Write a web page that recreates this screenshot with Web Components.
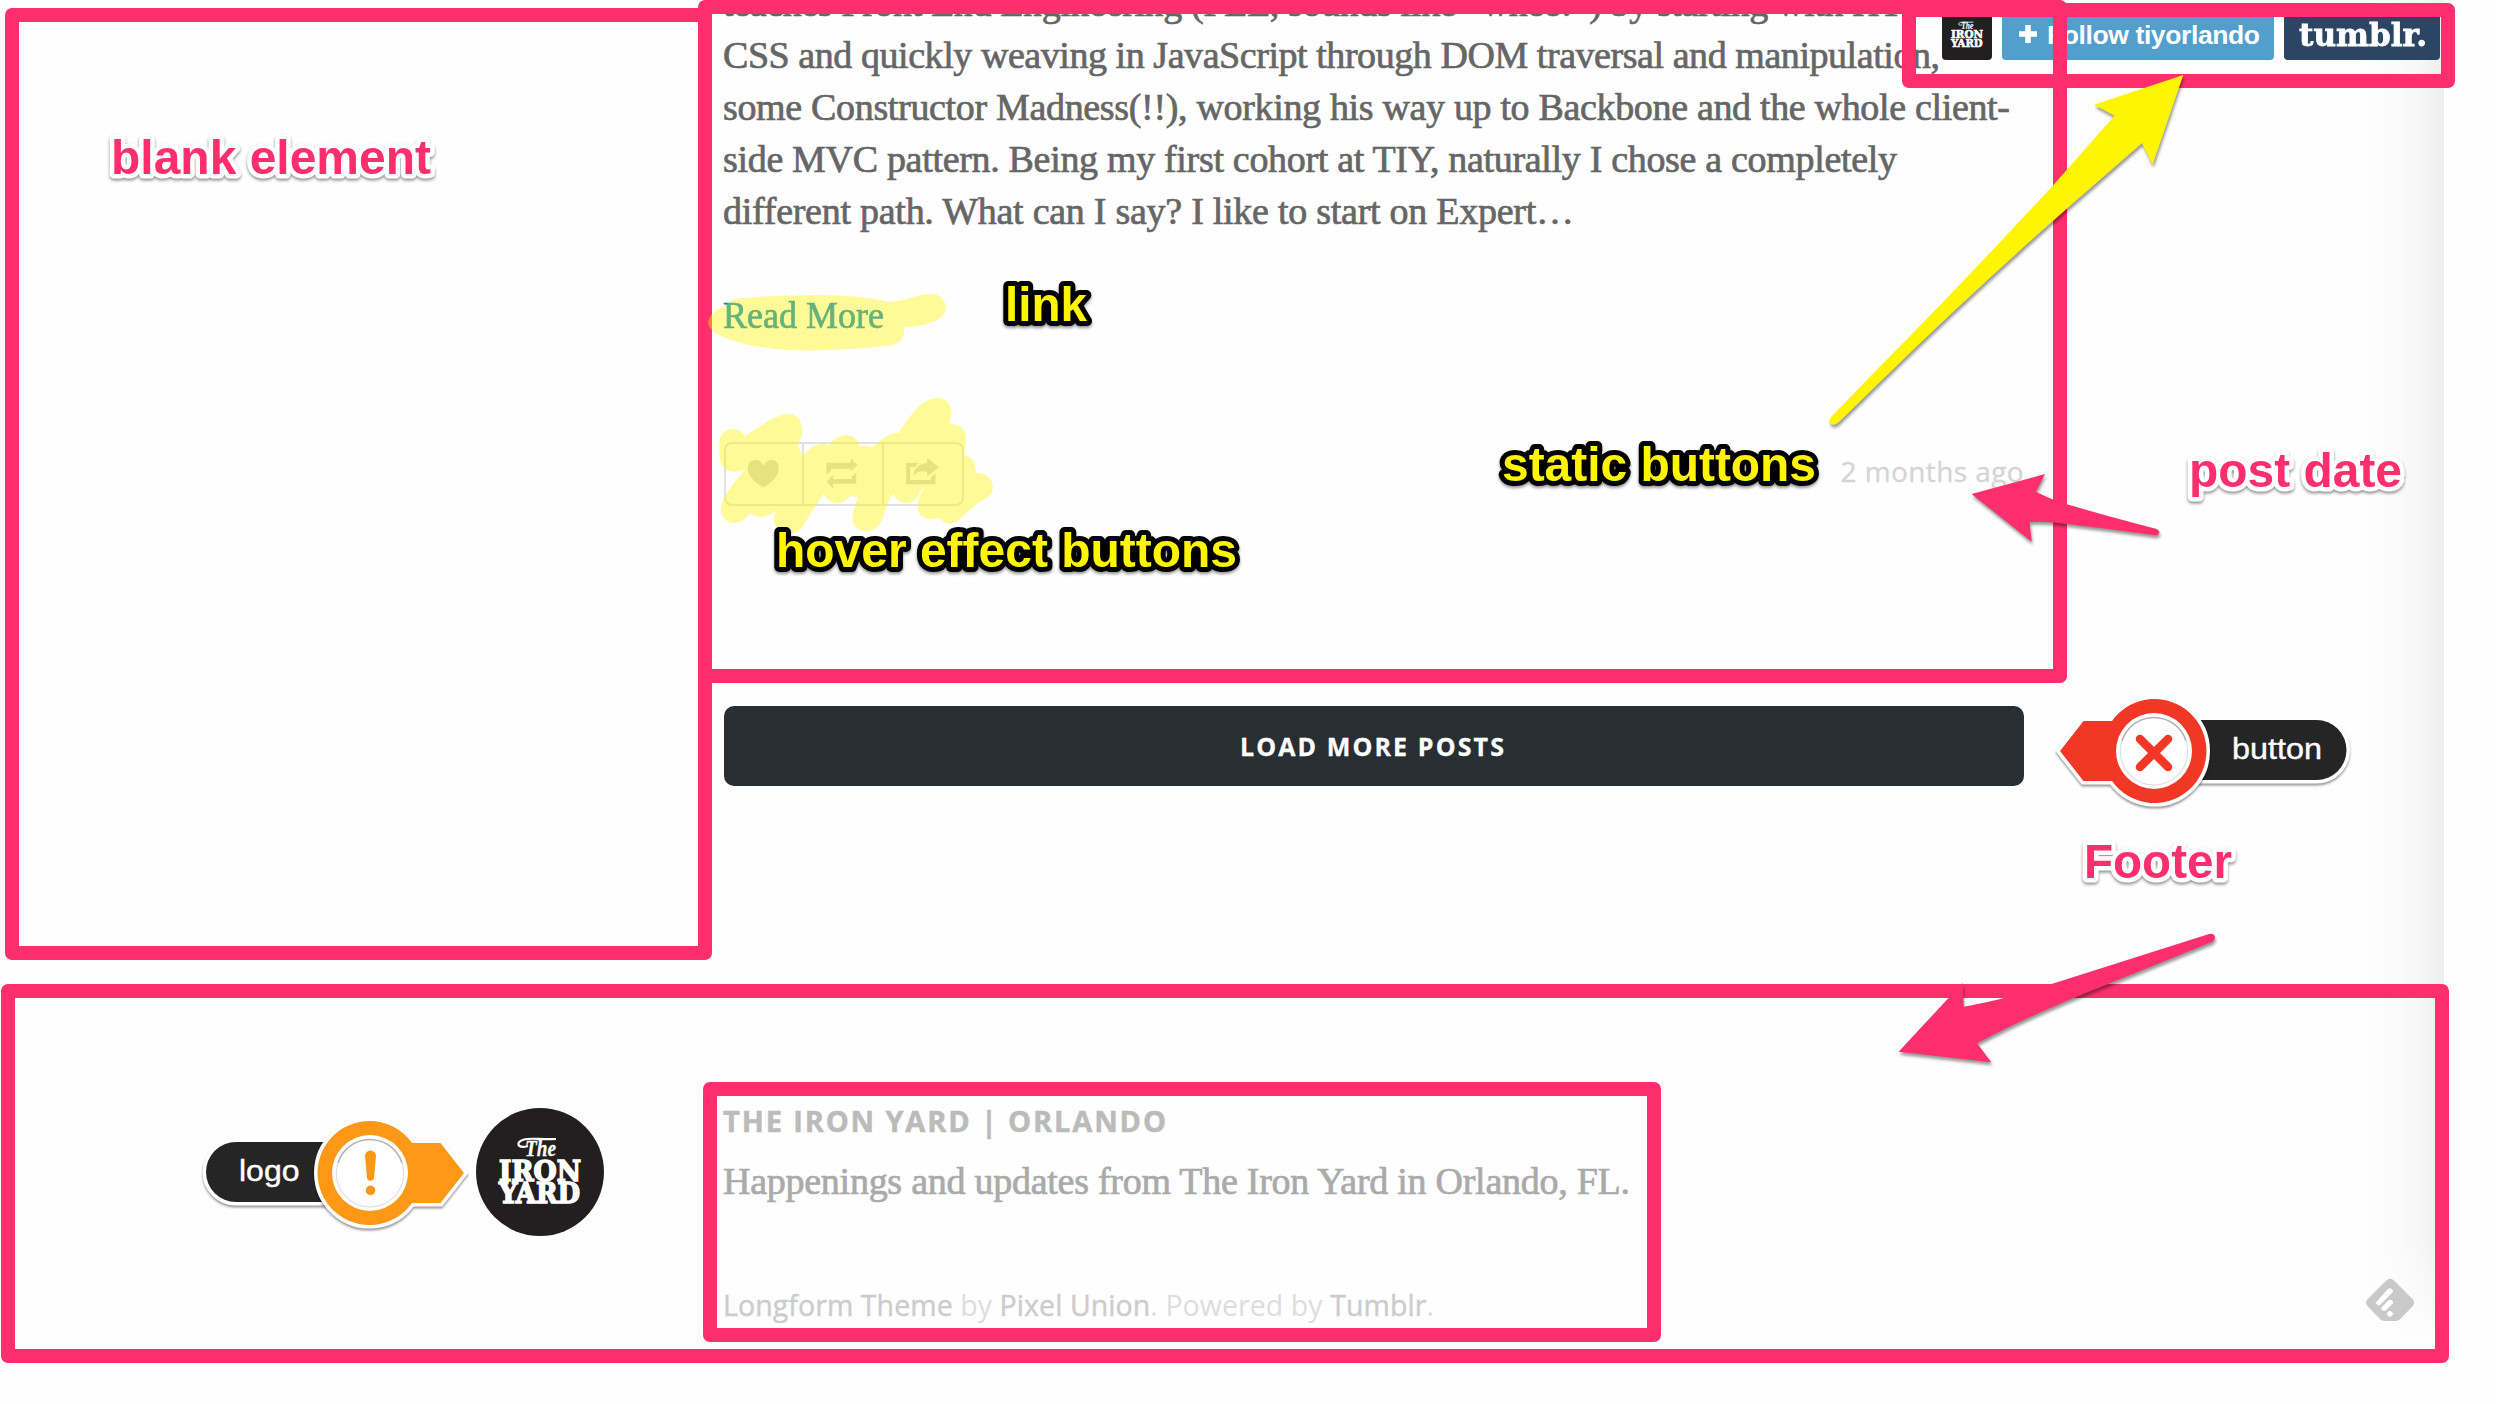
<!DOCTYPE html>
<html lang="en">
<head>
<meta charset="utf-8">
<title>The Iron Yard | Orlando</title>
<style>
html,body{margin:0;padding:0}
body{background:#fefefe;width:2496px;height:1404px;overflow:hidden;position:relative}
</style>
</head>
<body>
<blog-page>
  <blog-post slot="post">
    <fit-text w="1245">teaches Front End Engineering (FEE, sounds like “whee!”) by starting with HTML,</fit-text>
    <fit-text w="1217">CSS and quickly weaving in JavaScript through DOM traversal and manipulation,</fit-text>
    <fit-text w="1287">some Constructor Madness(!!), working his way up to Backbone and the whole client-</fit-text>
    <fit-text w="1174">side MVC pattern. Being my first cohort at TIY, naturally I chose a completely</fit-text>
    <fit-text w="851">different path. What can I say? I like to start on Expert…</fit-text>
  </blog-post>
  <load-button slot="more">LOAD MORE POSTS</load-button>
  <site-footer slot="footer"></site-footer>
</blog-page>
<follow-bar></follow-bar>
<feed-badge></feed-badge>
<ink-marks></ink-marks>
<frame-box x="5" y="8" w="707" h="952.3"></frame-box>
<frame-box x="698" y="0" w="1369" h="682.5"></frame-box>
<frame-box x="1902" y="3" w="553" h="85"></frame-box>
<frame-box x="1.2" y="984.2" w="2448.3" h="378.5"></frame-box>
<frame-box x="703" y="1082.4" w="958" h="259.3"></frame-box>
<arrow-marks></arrow-marks>
<note-label x="110.5" y="173.7" w="320">blank element</note-label>
<note-label x="2188.5" y="487.3" w="213">post date</note-label>
<note-label x="2084" y="878" w="148">Footer</note-label>
<note-label x="1005" y="320.7" w="82" tone="yellow">link</note-label>
<note-label x="776" y="566.7" w="461" tone="yellow">hover effect buttons</note-label>
<note-label x="1502" y="481" w="314" tone="yellow">static buttons</note-label>
<pin-callout kind="cross" label="button"></pin-callout>
<pin-callout kind="alert" label="logo"></pin-callout>

<script>
const define=(name,html,after)=>customElements.define(name,class extends HTMLElement{
  connectedCallback(){
    if(this.shadowRoot)return;
    const root=this.attachShadow({mode:'open'});
    root.innerHTML=typeof html==='function'?html(this):html;
    if(after)after(this,root);
  }
});

define('blog-page',`<style>
:host{display:block;width:2444px;height:1404px;overflow:hidden}
.sheet{display:flex;flex-direction:column;height:1404px;position:relative}
.shade{position:absolute;right:0;top:0;width:84px;height:1348px;background:linear-gradient(to right,rgba(0,0,0,0),rgba(0,0,0,.012) 40%,rgba(0,0,0,.028) 70%,rgba(0,0,0,.062));-webkit-mask:linear-gradient(#000 1240px,transparent 1345px)}
.col{width:1300px;margin-left:724px;height:1100px;flex:none}
</style><div class="sheet"><div class="col"><slot name="post"></slot><slot name="more"></slot></div><slot name="footer"></slot><div class="shade"></div></div>`);

define('blog-post',`<style>
:host{display:block;height:706px;margin-left:-1px;overflow:hidden;font:38px/52px "Liberation Serif",serif;color:#666;-webkit-text-stroke:.7px currentColor}
.body{display:flex;flex-direction:column;margin-top:-23px}
a{display:block;margin-top:52px;color:#08c;text-decoration:none}
.meta{display:flex;justify-content:space-between;margin:101px 0 0 1px;height:64px}
time{font:28px/58px "Open Sans",sans-serif;color:#d4d4d4;-webkit-text-stroke:.3px #d4d4d4}
</style><div class="body"><slot></slot></div><a><fit-text w="161" scale>Read More</fit-text></a>
<div class="meta"><share-controls></share-controls><time><fit-text w="183">2 months ago</fit-text></time></div>`);

define('share-controls',`<style>
:host{display:flex;width:240px;height:64px;border-radius:8px;box-shadow:inset 0 0 0 2px #e2e2e2}
button{all:unset;display:block;width:80px;height:64px;box-shadow:inset -2px 0 #e2e2e2}
button:last-child{box-shadow:none}
svg{display:block;width:80px;height:64px;fill:#d5d5d5}
</style>
<button><svg preserveAspectRatio="none" viewBox="87 187 202 192"><path d="M187 323C158 304 147 285 147 266C147 250 155 241 167 241C178 241 184 249 187 260C190 248 197 241 207 241C219 241 225 250 225 266C225 285 215 304 187 323Z"/></svg></button>
<button><svg preserveAspectRatio="none" viewBox="289 187 202 192"><path d="M346 284V249H407V236L424 256L407 275V267H357V275ZM421 279V312H362V326L346 307L362 286V298H410V290Z"/></svg></button>
<button><svg preserveAspectRatio="none" viewBox="491 187 202 192"><path d="M547 249H579L569 262H557V301H610V292L621 281V314H547ZM600 236L630 263L600 290V276C583 272 573 278 565 288C566 265 581 252 600 250Z"/></svg></button>`);

define('load-button',`<style>
:host{display:flex;height:80px;border-radius:10px;background:#272f34;align-items:center;justify-content:center;color:#fff;font:700 25px/80px "Open Sans",sans-serif;-webkit-text-stroke:.3px #fff}
fit-text{margin-right:2px}
</style><fit-text w="264"><slot></slot></fit-text>`);

define('site-footer',`<style>
:host{display:flex;gap:119px;padding-left:476px}
iron-logo{margin-top:8px;width:128px;height:128px;border-radius:50%}
.text{display:flex;flex-direction:column}
h2{margin:1px 0 0;font:700 29px/40px "Open Sans",sans-serif;color:#bbb;-webkit-text-stroke:.5px #bbb}
p{margin:14px 0 0;font:38px/52px "Liberation Serif",serif;color:#aaa;-webkit-text-stroke:.7px currentColor}
small{margin-top:78px;font:28.5px/40px "Open Sans",sans-serif;color:#ddd}
a{color:#ccc;-webkit-text-stroke:.4px #ccc}
</style><iron-logo></iron-logo><div class="text">
<h2><fit-text w="443">THE IRON YARD | ORLANDO</fit-text></h2>
<p><fit-text w="907">Happenings and updates from The Iron Yard in Orlando, FL.</fit-text></p>
<small><fit-text w="711"><a>Longform Theme</a> by <a>Pixel Union</a>. Powered by <a>Tumblr</a>.</fit-text></small></div>`);

define('iron-logo',`<style>
:host{display:block;background:#231f20;overflow:hidden;flex:none}
svg{display:block;width:100%;height:100%;fill:#fff}
text{font-family:"DejaVu Serif",serif;font-weight:700;font-size:27px;stroke:#fff;stroke-width:1.5px}
.the{font-family:"Liberation Serif",serif;font-style:italic;font-size:24px;stroke-width:.3px}
</style><svg viewBox="0 0 128 128">
<path d="M52 38C41 41 39 34 48 31.500C56 29.500 66 32 80 31" fill="none" stroke="#fff" stroke-width="2.2"/>
<text class="the" x="49" y="47.500" textLength="31" lengthAdjust="spacingAndGlyphs">The</text>
<text x="23" y="72.500" textLength="82" lengthAdjust="spacingAndGlyphs">IRON</text>
<text x="23" y="95" textLength="81" lengthAdjust="spacingAndGlyphs">YARD</text></svg>`);

define('follow-bar',`<style>
:host{position:absolute;left:1942px;top:10px;display:flex;gap:10px;height:50px;color:#fff}
iron-logo,.f,.t{height:50px;border-radius:4px;box-sizing:border-box}
iron-logo{width:50px}
.f{width:272px;background:#529ecc;display:flex;align-items:center;padding-left:17px;font:700 26.5px/50px "Liberation Sans",sans-serif}
.f svg{width:18px;height:18px;margin-right:10px;margin-bottom:2px}
.f fit-text{line-height:48px}
.t{width:156px;background:#2d4564;padding-left:15px;font:700 32px/51px "DejaVu Serif",serif;-webkit-text-stroke:.8px #fff}
</style><iron-logo></iron-logo><div class="f"><svg viewBox="0 0 18 18"><path d="M9 0V18M0 9H18" stroke="#fff" stroke-width="5.5"/></svg><fit-text w="213">Follow tiyorlando</fit-text></div><div class="t"><fit-text w="128" scale>tumblr.</fit-text></div>`);

define('feed-badge',`<style>:host{position:absolute;left:2365px;top:1278px}svg{display:block;width:50px;height:44px}</style>
<svg viewBox="1250 1134 121.35 132" preserveAspectRatio="none"><path fill="#c9c9c9" d="M1303 1140Q1311 1133 1319 1140L1366 1198Q1372 1208 1366 1218L1335 1258Q1331 1263 1325 1263H1297Q1291 1263 1287 1258L1256 1218Q1249 1208 1256 1198Z"/>
<path fill="#fff" d="M1276 1208L1305 1168Q1311 1162 1315 1167Q1320 1172 1317 1177L1288 1213Q1285 1217 1282 1216Q1276 1212 1276 1208ZM1289 1224L1307 1201Q1311 1197 1315 1201Q1320 1206 1318 1210L1302 1229Q1298 1234 1294 1232Q1289 1229 1289 1224ZM1302 1241L1308 1233H1313L1319 1241L1313 1250H1308Z"/></svg>`);

define('ink-marks',`<style>:host{position:absolute;left:0;top:0;z-index:2;pointer-events:none}svg{display:block}</style>
<svg width="2496" height="1404"><g fill="#fff500" fill-opacity=".4">
<path d="M708 323C708 318 714 309 725 306C730 300 737 298 745 298Q780 295 816 295Q864 295 888 302Q903 301 917 296C925 294 928 294 932 294C940 294 946 301 946 308C946 317 935 322 923 325Q914 327 904 327V333C903 340 898 344 892 345Q840 352 789 350Q752 348 725 338Q709 331 708 323Z"/>
<path transform="translate(690 380) scale(.39541 .33333)" d="M74 190C75 160 90 147 108 147C122 147 132 155 140 167C175 140 220 102 248 102C272 102 286 125 283 160Q280 182 273 199Q282 212 283 228Q308 196 330 192Q342 191 350 195Q372 165 393 165C415 165 426 180 428 200Q445 194 462 202Q500 160 520 158L528 158C560 100 590 54 625 54C650 54 662 75 660 100Q659 118 656 132C685 130 698 150 698 180Q697 205 693 226C715 230 723 250 723 279C750 278 766 298 766 320C766 345 750 355 735 363C700 390 680 431 658 431Q642 430 630 413Q618 418 610 417C586 417 574 395 575 375Q579 350 592 322Q584 327 580 342C574 360 560 369 547 369Q527 368 513 342Q500 365 490 405C480 440 466 453 446 453C422 453 410 435 411 412Q415 378 425 352Q415 352 405 347C397 360 385 369 372 369Q350 368 338 342Q310 390 290 430C280 452 270 460 258 459C232 460 211 440 211 415Q214 400 220 390Q202 410 180 411Q165 411 152 400Q133 429 113 429C90 429 77 405 78 385C82 350 115 300 145 263Q128 275 110 275C85 275 74 250 74 220Z"/></g></svg>`);

define('frame-box',e=>`<style>:host{position:absolute;z-index:1;box-sizing:border-box;pointer-events:none;border:14.3px solid #ff2f6d;border-radius:7px;left:${e.getAttribute('x')}px;top:${e.getAttribute('y')}px;width:${e.getAttribute('w')}px;height:${e.getAttribute('h')}px}</style>`);

define('arrow-marks',`<style>:host{position:absolute;left:0;top:0;z-index:3;pointer-events:none}svg{display:block}path{filter:drop-shadow(1px 3px 1.5px rgba(0,0,0,.4))}</style>
<svg width="2496" height="1404">
<path fill="#fff500" d="M2183.3 75L2094 104.7L2114.5 115.7L2053 185.5Q1960 286 1880 366.5L1831 417Q1828 421 1831 424Q1835 426 1839 422L1880 382Q1970 294 2067 208.5L2142 143.3L2152.6 164.7Z"/>
<path fill="#ff2f6d" d="M1971.5 494L2045 474L2036 491.7Q2050 499 2067 504.3Q2110 517 2156.7 529Q2160 531 2159.3 533Q2158 535.5 2155 535.3Q2110 529 2067 524Q2045 521 2029.5 522L2031.7 541.7Z"/>
<path fill="#ff2f6d" d="M1898.6 1051.7L1962.5 983L1963.7 1006.7Q2000 1001 2054 983.3L2209 934Q2214 933 2215 937Q2215 940 2212 942Q2160 963 2105.5 985Q2030 1015 1977 1043.3L1991.3 1062.3Z"/>
</svg>`);

define('note-label',e=>{const y=e.getAttribute('tone')==='yellow',w=+e.getAttribute('w');return `<style>
:host{position:absolute;z-index:4;left:${e.getAttribute('x')-20}px;top:${e.getAttribute('y')-50}px}
svg{display:block;overflow:visible;filter:drop-shadow(0 2.5px 1.5px rgba(0,0,0,.42))}
text{font:700 47.5px "Liberation Sans",sans-serif;paint-order:stroke;stroke-linejoin:round;stroke:${y?'#000':'#fff'};stroke-width:${y?10:9}px;fill:${y?'#fff500':'#ff2f6d'}}
</style><svg width="${w+40}" height="70"><text x="20" y="50" textLength="${w}" lengthAdjust="spacingAndGlyphs">${e.textContent}</text></svg>`});

define('pin-callout',e=>{const c=e.getAttribute('kind')==='cross',s=c?-1:1,col=c?'#f33726':'#ff9717';return `<style>
:host{position:absolute;z-index:4;left:${c?2034.3:190}px;top:${c?681:1103}px}
svg{display:block;overflow:visible}
.sh{filter:drop-shadow(0 2px 1.2px rgba(0,0,0,.4))}
text{font:29.5px "Liberation Sans",sans-serif;fill:#fff;stroke:#fff;stroke-width:.4px}
</style><svg width="320" height="140"><g transform="translate(${c?120:180} 70)">
<g transform="scale(${s} 1)">
<g class="sh"><path d="M0 -31H${c?-162.5:-134}a30 30 0 0 0 0 60H0Z" fill="#fff" stroke="#fff" stroke-width="7"/></g>
<path d="M0 -31H${c?-162.5:-134}a30 30 0 0 0 0 60H0Z" fill="#252525"/>
<g class="sh"><path d="M42 -30H70.5L94 0L70.5 30H42A52 52 0 1 1 42 -30Z" fill="#fff" stroke="#fff" stroke-width="7"/></g>
<path d="M42 -30H70.5L94 0L70.5 30H42A52 52 0 1 1 42 -30Z" fill="${col}"/></g>
<circle r="38" fill="#fff"/><circle r="33.7" cy=".3" fill="none" stroke="#000" stroke-opacity=".13" stroke-width="1.2"/><path d="M-32 -10A33.5 33.5 0 0 1 32 -10" fill="none" stroke="#000" stroke-opacity=".22" stroke-width="1.5"/>
${c?`<path d="M-14 -12L14 16M14 -12L-14 16" stroke="${col}" stroke-width="8.5" stroke-linecap="round"/>`:`<path d="M-5 -17A5.4 5.4 0 0 1 6 -17L4 5A3.6 3.6 0 0 1 -3 5Z" fill="${col}"/><circle cx=".5" cy="17.4" r="4.8" fill="${col}"/>`}
<text x="${c?78:-131}" y="${c?8:7.7}" textLength="${c?90:60.5}" lengthAdjust="spacingAndGlyphs">${e.getAttribute('label')}</text>
</g></svg>`});

/* Fits its text to the width given by the w attribute, by letter-spacing, or by a horizontal scale when the scale attribute is set. */
define('fit-text','<style>:host{display:block;white-space:nowrap}span{display:inline-block;transform-origin:0 50%}</style><span><slot></slot></span>',(e,root)=>{
  const s=root.querySelector('span');
  let t=e.textContent;
  const slot=e.querySelector('slot');
  if(slot)t=slot.assignedNodes().map(n=>n.textContent).join('');
  const w=+e.getAttribute('w'),natural=s.getBoundingClientRect().width;
  if(e.hasAttribute('scale'))s.style.transform=`scaleX(${w/natural})`;
  else s.style.letterSpacing=(w-natural)/Math.max(1,t.trim().length-1)+'px';
});
</script>
</body>
</html>
